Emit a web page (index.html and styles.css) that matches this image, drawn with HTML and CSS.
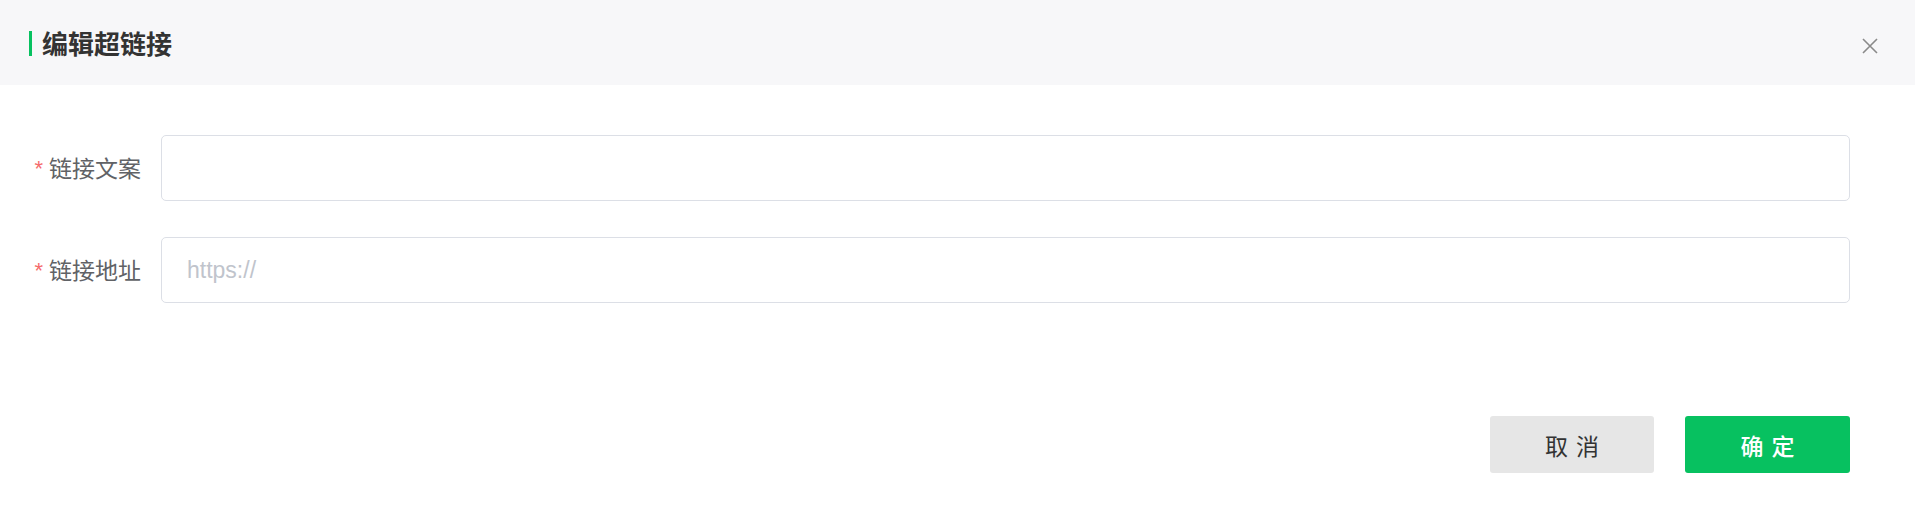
FILE: index.html
```html
<!DOCTYPE html>
<html lang="zh-CN">
<head>
<meta charset="utf-8">
<title>编辑超链接</title>
<link rel="stylesheet" href="styles.css">
</head>
<body>
<div class="dialog">
  <div class="header">
    <span class="bar"></span>
    <span class="title">编辑超链接</span>
    <span class="close">
      <svg width="16" height="16" viewBox="0 0 16 16"><path d="M1 1 L15 15 M15 1 L1 15" stroke="#8a8a8a" stroke-width="1.6" fill="none"/></svg>
    </span>
  </div>
  <div class="body">
    <div class="form">
      <label class="label"><span class="req">*</span>链接文案</label>
      <input class="input" type="text">
      <label class="label"><span class="req">*</span>链接地址</label>
      <input class="input" type="text" placeholder="https://">
    </div>
    <div class="footer">
      <button class="btn btn-cancel">取消</button>
      <button class="btn btn-ok">确定</button>
    </div>
  </div>
</div>
</body>
</html>
```
FILE: styles.css
```css
html, body {
  margin: 0;
  padding: 0;
  background: #ffffff;
}
body {
  font-family: "Liberation Sans", "Noto Sans CJK SC", sans-serif;
  width: 1915px;
  height: 520px;
  overflow: hidden;
}
.dialog {
  width: 1915px;
}
.header {
  height: 85px;
  background: #f7f7f9;
  display: flex;
  align-items: center;
  padding: 0 37px 0 29px;
  box-sizing: border-box;
}
.bar {
  width: 3px;
  height: 25px;
  background: #07c160;
  margin-right: 10px;
  margin-top: 1px;
}
.title {
  font-family: "Noto Sans CJK SC", sans-serif;
  font-size: 26px;
  font-weight: 700;
  color: #333333;
  line-height: 1;
}
.close {
  margin-left: auto;
  display: flex;
  width: 16px;
  height: 16px;
  margin-top: 6px;
}
.body {
  padding: 50px 65px 0 0;
}
.form {
  display: grid;
  grid-template-columns: 141px 1fr;
  column-gap: 20px;
  row-gap: 36px;
  align-items: center;
}
.label {
  text-align: right;
  font-family: "Noto Sans CJK SC", sans-serif;
  font-size: 23px;
  color: #606266;
  line-height: 1;
  white-space: nowrap;
}
.req {
  color: #f56c6c;
  font-family: "Liberation Sans", sans-serif;
  font-size: 22px;
  margin-right: 6px;
  position: relative;
  top: -1px;
}
.input {
  height: 66px;
  box-sizing: border-box;
  border: 1px solid #dcdfe6;
  border-radius: 5px;
  padding: 0 25px;
  font-family: "Liberation Sans", "Noto Sans CJK SC", sans-serif;
  font-size: 23px;
  color: #333;
  outline: none;
  margin: 0;
  width: 100%;
}
.input::placeholder {
  color: #c0c4cc;
}
.footer {
  display: flex;
  justify-content: flex-end;
  gap: 31px;
  margin-top: 113px;
}
.btn {
  width: 165px;
  height: 57px;
  border: none;
  border-radius: 3px;
  font-family: "Noto Sans CJK SC", sans-serif;
  font-size: 23px;
  letter-spacing: 8px;
  padding: 0 0 0 8px;
  cursor: pointer;
}
.btn-cancel {
  width: 164px;
  background: #e6e6e6;
  color: #333333;
}
.btn-ok {
  background: #07c160;
  color: #ffffff;
  font-weight: 500;
}
```
